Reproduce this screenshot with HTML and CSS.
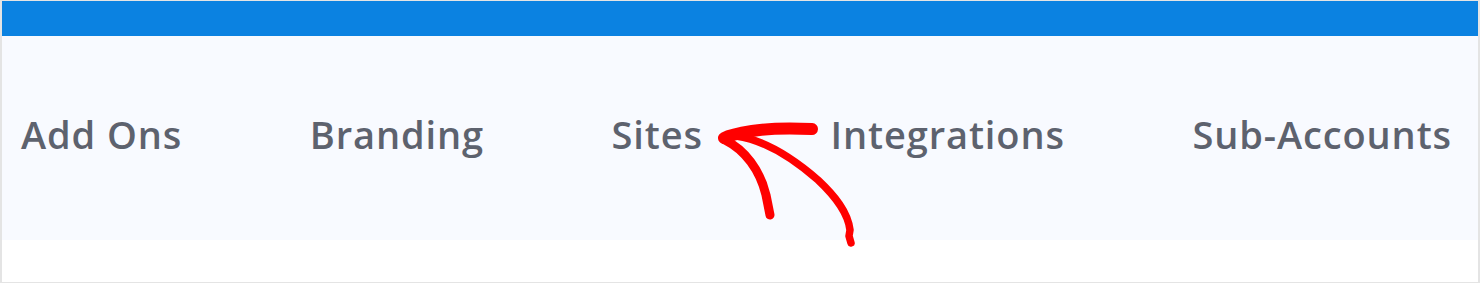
FILE: index.html
```html
<!DOCTYPE html>
<html>
<head>
<meta charset="utf-8">
<link rel="stylesheet" href="styles.css">
</head>
<body>
<div class="frame">
  <div class="topbar"></div>
  <nav class="tabs">
    <span class="tab">Add Ons</span>
    <span class="tab">Branding</span>
    <span class="tab">Sites</span>
    <span class="tab">Integrations</span>
    <span class="tab">Sub-Accounts</span>
  </nav>
  <div class="bottom"></div>
  <svg class="arrow" width="1480" height="283" viewBox="0 0 1480 283" xmlns="http://www.w3.org/2000/svg">
    <g fill="none" stroke="#ff0000" stroke-linecap="round" stroke-linejoin="round">
      <path d="M812 129 C790 128 770 128 752 131 C740 133 730 135 724 138" stroke-width="12"/>
      <path d="M725 140 C745 150 760 170 766 195 C768 205 769 210 770 215" stroke-width="9"/>
      <path d="M736 136 C765 140 795 160 818 180 C835 196 848 212 850 230 L849 236 L851 243" stroke-width="7.5"/>
    </g>
  </svg>
</div>
</body>
</html>
```
FILE: styles.css
```css
html, body {
  margin: 0;
  padding: 0;
  background: #ffffff;
}
.frame {
  position: relative;
  width: 1480px;
  height: 283px;
  box-sizing: border-box;
  border: 1px solid #e4e4e4;
  border-left-width: 2px;
  border-right-width: 2px;
  display: flex;
  flex-direction: column;
  background: #ffffff;
  overflow: hidden;
}
.topbar {
  height: 35px;
  background: #0b82e1;
  flex: none;
}
.tabs {
  height: 204px;
  flex: none;
  background: #f8faff;
  display: flex;
  align-items: center;
  justify-content: space-between;
  padding: 0 26px 8px 19px;
  box-sizing: border-box;
}
.tab {
  font-family: "Open Sans", "Liberation Sans", sans-serif;
  font-weight: 600;
  font-size: 38px;
  color: #5d626e;
  letter-spacing: 0.9px;
}
.bottom {
  flex: 1;
}
.arrow {
  position: absolute;
  left: -2px;
  top: -1px;
}
```
